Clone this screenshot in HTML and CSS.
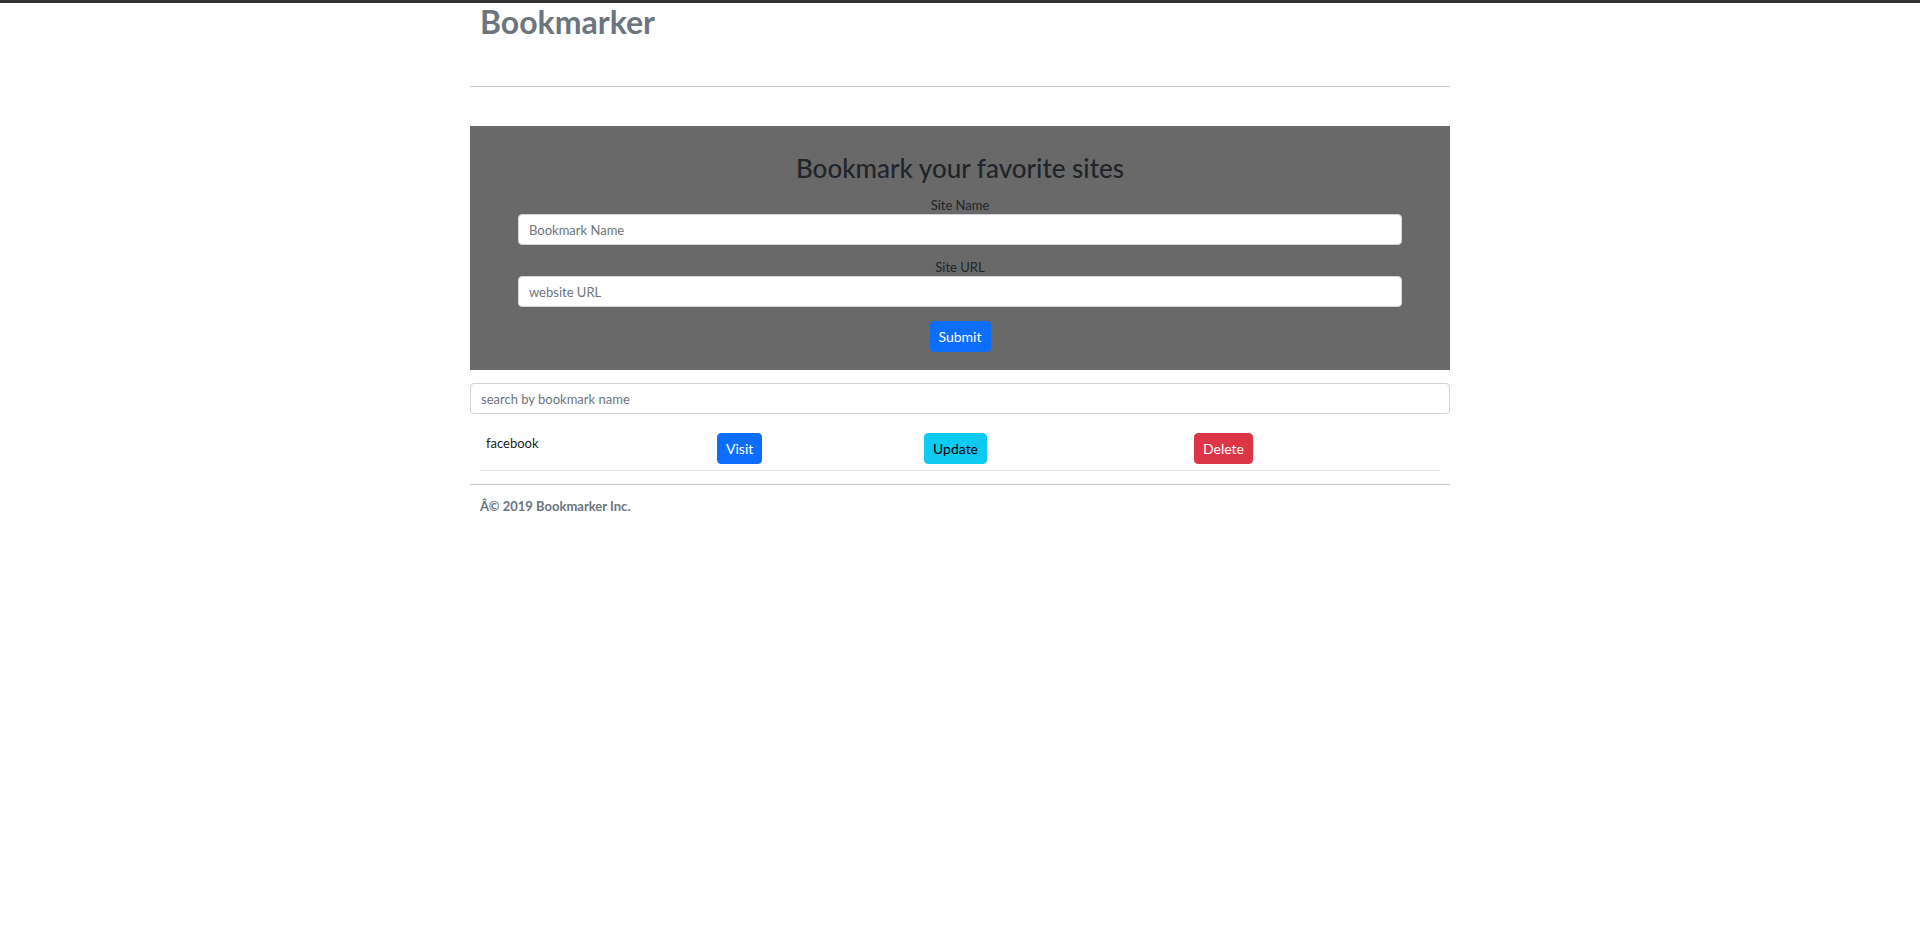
FILE: index.html
```html
<!DOCTYPE html>
<html lang="en">
<head>
<meta charset="utf-8">
<title>Bookmarker</title>
<link rel="stylesheet" href="styles.css">
</head>
<body>
<div class="topbar"></div>
<div class="container">
  <header class="header">
    <h3 class="brand">Bookmarker</h3>
  </header>
  <hr class="rule rule-top">
  <section class="jumbo">
    <h2 class="jumbo-title">Bookmark your favorite sites</h2>
    <form class="form">
      <div class="group">
        <label class="label" for="siteName">Site Name</label>
        <input class="control" id="siteName" type="text" placeholder="Bookmark Name">
      </div>
      <div class="group">
        <label class="label" for="siteUrl">Site URL</label>
        <input class="control" id="siteUrl" type="text" placeholder="website URL">
      </div>
      <button class="btn btn-primary" type="button">Submit</button>
    </form>
  </section>
  <input class="control search" type="text" placeholder="search by bookmark name">
  <div class="list">
    <div class="list-row">
      <div class="cell cell-name">facebook</div>
      <div class="cell"><button class="btn btn-primary" type="button">Visit</button></div>
      <div class="cell"><button class="btn btn-info" type="button">Update</button></div>
      <div class="cell"><button class="btn btn-danger" type="button">Delete</button></div>
    </div>
  </div>
  <hr class="rule rule-bottom">
  <footer class="footer">Â© 2019 Bookmarker Inc.</footer>
</div>
</body>
</html>
```

FILE: styles.css
```css
* {
  box-sizing: border-box;
}

body {
  margin: 0;
  font-family: Lato, "Noto Sans", "Liberation Sans", sans-serif;
  font-size: 14px;
  line-height: 1.5;
  color: #212529;
  background: #fff;
}

.topbar {
  height: 3px;
  background: #333;
}

.container {
  width: 980px;
  margin: 0 auto;
}

.header {
  padding: 0 10px;
}

.brand {
  margin: 0;
  font-size: 32px;
  line-height: 37px;
  font-weight: 700;
  color: #6c757d;
}

.rule {
  border: 0;
  height: 1px;
  background: #c8c8c8;
  margin: 0;
}

.rule-top {
  margin-top: 46px;
}

.jumbo {
  margin-top: 39px;
  background: #696969;
  padding: 28px 48px 18px;
  text-align: center;
}

.jumbo-title {
  margin: 0 0 13px;
  font-size: 26px;
  line-height: 29px;
  font-weight: 500;
  color: #212529;
}

.form {
  display: flex;
  flex-direction: column;
  align-items: center;
}

.group {
  width: 100%;
  display: flex;
  flex-direction: column;
  margin-bottom: 13px;
}

.group + .group {
  margin-bottom: 14px;
}

.label {
  font-size: 13px;
  line-height: 18px;
  color: #212529;
  text-align: center;
}

.control {
  display: block;
  width: 100%;
  height: 31px;
  padding: 4px 10px;
  font-family: inherit;
  font-size: 13px;
  line-height: 1.5;
  color: #212529;
  background: #fff;
  border: 1px solid #ced4da;
  border-radius: 4px;
  outline: none;
}

.control::placeholder {
  color: #6c757d;
}

.search {
  margin-top: 13px;
}

.btn {
  display: inline-block;
  height: 31px;
  padding: 4px 8px;
  font-family: inherit;
  font-size: 14px;
  line-height: 1.5;
  border: 1px solid transparent;
  border-radius: 4px;
  cursor: pointer;
}

.btn-primary {
  background: #0d6efd;
  border-color: #0d6efd;
  color: #fff;
}

.btn-info {
  background: #0dcaf0;
  border-color: #0dcaf0;
  color: #000;
}

.btn-danger {
  background: #dc3545;
  border-color: #dc3545;
  color: #fff;
}

.list {
  margin: 11px 10px 0;
}

.list-row {
  display: grid;
  grid-template-columns: 231px 207px 270px 1fr;
  border-bottom: 1px solid #dee2e6;
}

.cell {
  padding: 8px 6px 6px;
}

.cell-name {
  font-size: 13px;
  line-height: 21px;
}

.rule-bottom {
  margin-top: 13px;
}

.footer {
  margin-top: 11px;
  padding: 0 10px;
  font-size: 13px;
  line-height: 20px;
  font-weight: 700;
  color: #6c757d;
}
```
